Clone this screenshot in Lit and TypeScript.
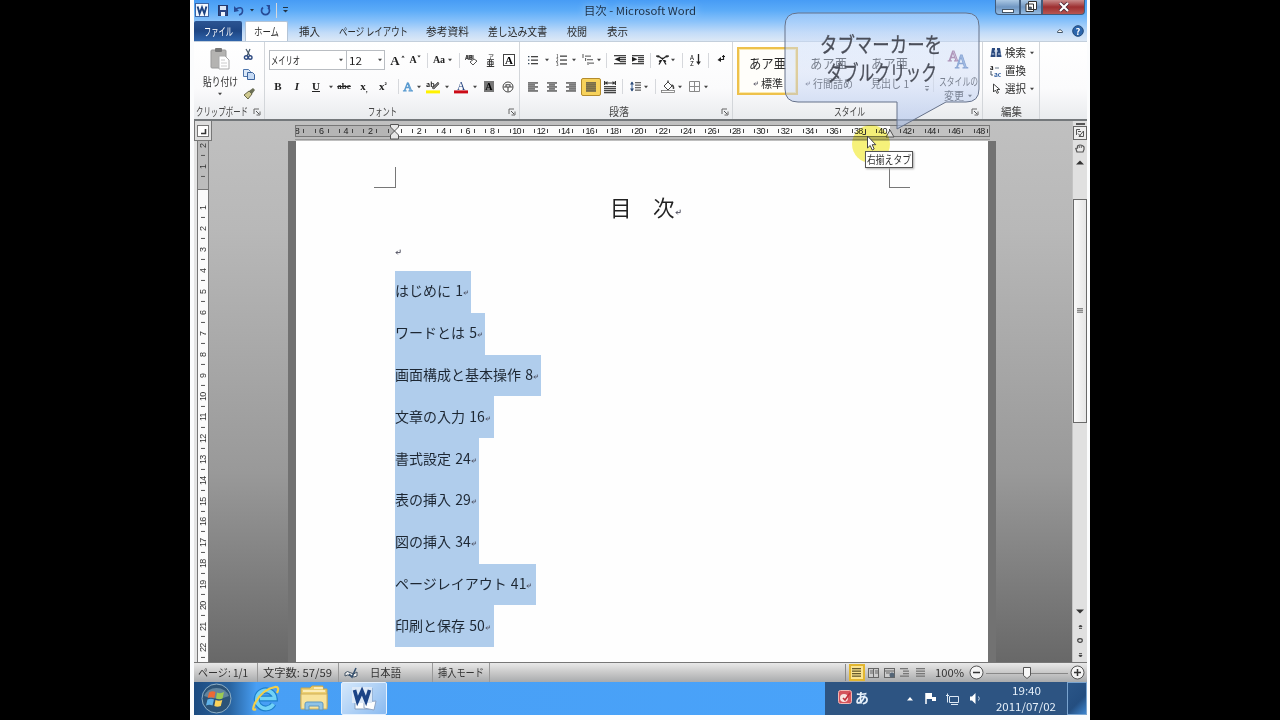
import { LitElement, html, css, svg } from 'lit';
import { customElement } from 'lit/decorators.js';
import { styleMap } from 'lit/directives/style-map.js';

// a label squeezed to the width of the narrow UI font
const fit = (text: string, w: number, size = 11, cls = '') => html`
  <svg class="fit ${cls}" width=${w} height=${size + 4} font-size=${size}>
    <text x="0" y=${size + 0.5} textLength=${w} lengthAdjust="spacingAndGlyphs">${text}</text>
  </svg>`;

const pic = (w: number, h: number, body: unknown) => html`
  <svg class="pic" width=${w} height=${h} viewBox="0 0 ${w} ${h}">${body}</svg>`;

// text lines used by the list and alignment icons: [x, y, width]
const bars = (rows: number[][], color = '#444') =>
  rows.map(([x, y, w]) => svg`<rect x=${x} y=${y} width=${w} height="1.3" fill=${color} />`);

const arrow = () => pic(6, 4, svg`<path d="M1 .8h4L3 3.2z" fill="#444" />`);
const sep = () => html`<i class="sep"></i>`;
const glyph = (text: string, cls = '') => html`<span class="glyph ${cls}">${text}</span>`;
const launcher = () => pic(8, 8, svg`<path d="M1 6V1h5M3.5 7h3.500V3.500" fill="none" stroke="#666" /><path d="M3 3l3 3" stroke="#555" />`);
const ret = (s = 6) => html`<svg class="ret" width=${s} height=${s} viewBox="0 0 6 6">
  <path d="M5.2 .6V3.6H1M2.8 1.8 1 3.6l1.8 1.8" fill="none" stroke="#445" stroke-width=".9" /></svg>`;

type Tool = [center: number, width: number, icon: unknown];

// tools on one line, each centred on its stop counted from the line's start
const toolRow = (tools: Tool[]) => {
  let end = 0;
  return html`<div class="tools">${tools.map(([c, w, icon]) => {
    const gap = c - w / 2 - end;
    end = c + w / 2;
    return html`<span class="tool" style=${styleMap({ width: `${w}px`, marginLeft: `${gap}px` })}>${icon}</span>`;
  })}</div>`;
};

const wordLogo = (s: number) => html`<svg class="pic" width=${s} height=${s} viewBox="0 0 14 14">
  <rect x=".5" y=".5" width="13" height="13" fill="#f4f8fd" stroke="#3b64a3" />
  <path d="M2.6 3.5 4.6 10.5 7 4.4 9.4 10.5 11.4 3.5" fill="none" stroke="#1d4382" stroke-width="1.9" /></svg>`;

const alignIcon = (xs: number[][]) => pic(12, 10, bars(xs));
const full = [0.3, 2.3, 4.3, 6.3, 8.3];

// counted from the end of the font size box
const fontTop: Tool[] = [
  [10, 12, glyph('A', 'f12')], [18, 4, pic(4, 10, svg`<path d="M.3 2.4h3.4L2 .4z" fill="#333" />`)],
  [28, 9, glyph('A', 'f9')], [34, 4, pic(4, 10, svg`<path d="M.3.6h3.4L2 2.4z" fill="#333" />`)],
  [42, 2, sep()], [54, 14, glyph('Aa', 'f9')], [65, 6, arrow()], [74, 2, sep()],
  [86, 13, pic(13, 13, svg`<rect x="1" y="1" width="8" height="4" fill="#999" /><text x="0" y="6" font-size="6" font-weight="700" fill="#333">AB</text><path d="m5 8 4-3 3 2-4 4z" fill="#fff" stroke="#555" />`)],
  [106, 12, pic(12, 13, svg`<text x="3" y="5" font-size="6" fill="#222">ア</text><text x="1.5" y="12.4" font-size="8" font-weight="700" fill="#333">亜</text>`)],
  [124, 12, pic(12, 12, svg`<rect x=".5" y=".5" width="11" height="11" fill="#fff" stroke="#444" /><text x="2" y="10" font-size="11" font-weight="700" font-family="Liberation Serif, serif">A</text>`)],
];

const fontBottom: Tool[] = [
  [13, 10, glyph('B', 'b')], [32, 8, glyph('I', 'it b')], [51, 10, glyph('U', 'u b')], [66, 6, arrow()],
  [79, 14, glyph('abe', 'strike')], [99, 13, html`${glyph('x', 'b')}<sub>,</sub>`], [118, 12, html`${glyph('x', 'b')}<sup>²</sup>`],
  [133, 2, sep()],
  [143, 12, pic(12, 13, svg`<text x="1.2" y="10.5" font-size="13" font-family="Liberation Serif, serif" fill="#eaf4ff" stroke="#5a9bd0" stroke-width=".9">A</text>`)],
  [154, 6, arrow()],
  [168, 14, pic(14, 14, svg`<text x="0" y="7" font-size="7" font-weight="700" fill="#222">ab</text><path d="m6 8 6-6 1 2-5 5z" fill="#777" stroke="#333" stroke-width=".6" /><rect y="10.4" width="14" height="3" fill="#fff200" />`)],
  [182, 6, arrow()],
  [196, 14, pic(14, 14, svg`<text x="3" y="9.5" font-size="11.5" font-family="Liberation Serif, serif" fill="#1f3f7d">A</text><rect y="10.4" width="14" height="3" fill="#cb0a16" />`)],
  [210, 6, arrow()],
  [224, 10, pic(10, 11, svg`<rect width="10" height="11" fill="#777" /><text x="1.2" y="9" font-size="10" font-family="Liberation Serif, serif" font-weight="700">A</text>`)],
  [243, 12, pic(12, 12, svg`<circle cx="6" cy="6" r="5" fill="#fff" stroke="#444" /><path d="M1.5 6h9M3.5 3.7h5M6 6v4.500M4 3.700v2.300M8 3.700v2.300" stroke="#444" stroke-width="1.100" />`)],
];

const paraTop: Tool[] = [
  [13, 10, pic(10, 10, svg`${bars([[3, 1, 7], [3, 4.5, 7], [3, 8, 7]])}<path d="M0 1.6h1.4M0 5.1h1.4M0 8.6h1.4" stroke="#345" stroke-width="1.4" />`)],
  [27, 6, arrow()],
  [41, 11, pic(11, 12, svg`${bars([[4, 1.5, 7], [4, 5.4, 7], [4, 9.3, 7]])}<text x="0" y="4" font-size="4.5">1</text><text x="0" y="8" font-size="4.5">2</text><text x="0" y="12" font-size="4.5">3</text>`)],
  [54, 6, arrow()],
  [68, 12, pic(12, 12, svg`${bars([[3, 1.5, 6], [5, 5, 6], [7, 8.5, 5]], '#777')}<path d="M1 0v4M3.6 4v3M6 8v3" stroke="#555" />`)],
  [79, 6, arrow()], [86, 2, sep()],
  [100, 12, pic(12, 10, svg`${bars([[0, 0, 12], [6, 2, 6], [6, 4, 6], [6, 6, 6], [0, 8, 12]])}<path d="M6 1.8v5L.5 4.3z" fill="#222" />`)],
  [118, 12, pic(12, 10, svg`${bars([[0, 0, 12], [6, 2, 6], [6, 4, 6], [6, 6, 6], [0, 8, 12]])}<path d="M0 1.8v5l5.5-2.5z" fill="#222" />`)],
  [130, 2, sep()],
  [142, 13, pic(13, 11, svg`<path d="M3 9.5 6.5 3.500 10 9.5M0 1.2h3.4M9.6 1.2H13M2 .2v2.4M11 .2v2.4M3 1.500l7 5M10 1.500l-7 5" fill="none" stroke="#222" stroke-width="1.3" />`)],
  [153, 6, arrow()], [162, 2, sep()],
  [175, 11, pic(11, 12, svg`<text x="0" y="5.6" font-size="6.4">A</text><text x="0" y="12" font-size="6.4">Z</text><path d="M8.5 0v9" stroke="#222" stroke-width="1.3" /><path d="M6.2 7.6h4.6L8.5 11z" fill="#222" />`)],
  [188, 2, sep()],
  [201, 8, pic(8, 10, svg`<path d="M6.5 0v4.5H3M5 1.5h3" fill="none" stroke="#222" stroke-width="1.2" /><path d="M4 2v5L.5 5z" fill="#222" />`)],
];

const paraBottom: Tool[] = [
  [13, 12, alignIcon(full.map((y, i) => [1, y, i % 2 ? 7 : 10]))],
  [32, 12, alignIcon(full.map((y, i) => [i % 2 ? 3 : 1, y, i % 2 ? 6 : 10]))],
  [51, 12, alignIcon(full.map((y, i) => [i % 2 ? 4 : 1, y, i % 2 ? 7 : 10]))],
  [71, 20, html`<span class="pressed">${alignIcon(full.map((y) => [1, y, 10]))}</span>`],
  [90, 12, pic(12, 12, svg`${bars([[0, 5, 12], [0, 7, 12], [0, 9, 12], [0, 11, 12]])}<path d="M.6 0v4M11.4 0v4M1 2h10" stroke="#333" stroke-width="1.2" /><path d="m1 2 2.4-2v4zM11 2 8.6 0v4z" fill="#333" />`)],
  [102, 2, sep()],
  [115, 11, pic(11, 11, svg`${bars([[5, 1, 6], [5, 3.5, 6], [5, 6, 6], [5, 8.5, 6]], '#666')}<path d="M2 1v9" stroke="#2c5a97" /><path d="m0 3.4 2-3 2 3zM0 7.6l2 3 2-3z" fill="#2c4a77" />`)],
  [126, 6, arrow()], [135, 2, sep()],
  [148, 14, pic(14, 13, svg`<path d="m3 6 4-4 4 4-4 4z" fill="#fff" stroke="#444" /><path d="M7 2V.5M10.5 5q2.5.5 2 4" fill="none" stroke="#444" stroke-width="1.4" /><rect x=".5" y="10.5" width="13" height="2" fill="#fff" stroke="#777" stroke-width=".8" />`)],
  [160, 6, arrow()],
  [174, 11, pic(11, 11, svg`<path d="M.5.5h10v10H.5zM5.5.5v10M.5 5.5h10" fill="none" stroke="#888" />`)],
  [186, 6, arrow()],
];

const tabs = [
  { text: '挿入', w: 21, lead: 11 },
  { text: 'ページ レイアウト', w: 69, lead: 19 },
  { text: '参考資料', w: 43, lead: 18 },
  { text: '差し込み文書', w: 59, lead: 19 },
  { text: '校閲', w: 20, lead: 20 },
  { text: '表示', w: 21, lead: 20 },
];

const entries = [
  { text: 'はじめに 1', w: 76 },
  { text: 'ワードとは 5', w: 90 },
  { text: '画面構成と基本操作 8', w: 146 },
  { text: '文章の入力 16', w: 99 },
  { text: '書式設定 24', w: 84 },
  { text: '表の挿入 29', w: 84 },
  { text: '図の挿入 34', w: 84 },
  { text: 'ページレイアウト 41', w: 140.5 },
  { text: '印刷と保存 50', w: 99 },
];

const styleCards = [
  { name: '標準', w: 22, on: true, mark: true },
  { name: '行間詰め', w: 40, on: false, mark: true },
  { name: '見出し 1', w: 38, on: false, mark: false },
];

const columns = Array.from({ length: 29 }, (_, i) => (i - 4) * 2);
const lines = Array.from({ length: 25 }, (_, i) => i - 2);

@customElement('app-root')
export class AppRoot extends LitElement {
  static styles = css`
    :host {
      display: block;
      width: 1280px;
      height: 720px;
      background: #000;
      overflow: hidden;
      font: 11px 'Noto Sans CJK JP', 'Open Sans', sans-serif;
      color: #2b2b2b;
    }
    * { box-sizing: border-box; }
    svg { display: block; flex: none; overflow: visible; }
    .fit text { fill: currentColor; }
    .frame {
      position: relative;
      width: 900px;
      height: 720px;
      margin: 0 auto;
      padding: 0 3px 5px 4px;
      background: #fbfcfd;
      display: flex;
      flex-direction: column;
      overflow: hidden;
    }
    .head {
      height: 41px;
      flex: none;
      background: linear-gradient(#479cf5, #5babf8 25%, #85c0fa 50%, #c3dcf8 80%, #dce8f6);
    }
    .title { height: 21px; display: flex; }
    .quick { width: 390px; display: flex; align-items: center; padding: 0 0 1px 1px; gap: 6px; }
    .quick .logo { margin-right: 3px; }
    .caption { display: flex; align-items: center; flex: 1; color: #1c2f45; }
    .caption svg { filter: drop-shadow(0 0 4px #d8ebff); }
    .controls { display: flex; height: 15px; margin-right: 2px; }
    .ctl {
      display: flex;
      align-items: center;
      justify-content: center;
      border: 1px solid #405c7d;
      border-top: 0;
      background: linear-gradient(#abc8e4, #6f96c2 50%, #95bce2);
    }
    .ctl.min { width: 25px; border-radius: 0 0 0 4px; }
    .ctl.max { width: 22px; }
    .ctl.close { width: 43px; border-radius: 0 0 4px 0; background: linear-gradient(#c98c8b, #9d2f30 50%, #b85652); }
    .tabs { height: 20px; display: flex; align-items: center; }
    .file {
      width: 48px; height: 20px; color: #fff; display: flex; align-items: center; justify-content: center;
      background: linear-gradient(#2c5592, #1e4684 50%, #2f64ab); border-radius: 2px 2px 0 0;
    }
    .home {
      width: 43px; height: 20px; margin-left: 3px; display: flex; align-items: center; justify-content: center;
      background: #fff; border: 1px solid #b4c4d6; border-bottom: 0; border-radius: 2px 2px 0 0;
    }
    .help { margin-left: auto; display: flex; align-items: center; gap: 8px; padding-right: 3px; }
    .ribbon {
      height: 80px;
      flex: none;
      display: flex;
      background: linear-gradient(#fff, #fbfbfc 60%, #e9ebee);
      border-top: 1px solid #c3cfdc;
      border-bottom: 2px solid #74787b;
    }
    .group { display: flex; flex-direction: column; border-right: 1px solid #d3d6da; height: 77px; }
    .body { flex: 1; min-height: 0; }
    .foot {
      height: 15px; display: flex; align-items: center; justify-content: center; flex: none;
      position: relative; color: #444; padding-right: 20px;
    }
    .foot .pic { position: absolute; right: 3px; top: 4px; }
    .clip { width: 71px; }
    .clip .foot { padding-right: 14px; }
    .font { width: 255px; }
    .para { width: 213px; }
    .para .foot { padding-right: 14px; }
    .styles { width: 250px; }
    .styles .foot { padding-right: 16px; }
    .edit { width: 57px; }
    .edit .foot { padding-right: 0; }
    .pasteset { display: flex; padding: 6px 0 0 8px; }
    .paste { width: 36px; display: flex; flex-direction: column; align-items: center; gap: 3px; }
    .clips { display: flex; flex-direction: column; gap: 8px; padding: 1px 0 0 5px; }
    .tools { display: flex; align-items: center; height: 27px; }
    .tool { display: flex; align-items: center; justify-content: center; flex: none; height: 20px; }
    .line { display: flex; padding-top: 5px; height: 31px; align-items: center; }
    .combo {
      height: 20px; border: 1px solid #b9bdc2; background: #fff; display: flex; align-items: center;
      justify-content: space-between; padding: 0 2px 0 1px; color: #222;
    }
    .combo.face { width: 78px; margin-left: 4px; }
    .combo.size { width: 39px; margin-left: -1px; padding: 0 1px 0 2px; }
    .glyph { font: 11px 'Liberation Serif', serif; color: #222; line-height: 1; }
    .b { font-weight: 900; }
    .it { font-style: italic; }
    .u { text-decoration: underline; }
    .strike { font-size: 9px; font-weight: 700; text-decoration: line-through; }
    .f12 { font-size: 13px; font-weight: 700; }
    .f9 { font-size: 10px; font-weight: 700; }
    sub, sup { font: 700 7px 'Liberation Sans', sans-serif; line-height: 1; }
    sub { margin-top: 6px; }
    sup { margin-top: -5px; }
    .sep { width: 1px; height: 15px; background: #d6d8dc; }
    .pressed {
      width: 20px; height: 18px; border: 1px solid #b48b2c; border-radius: 2px; background: #f7d25b;
      display: flex; align-items: center; justify-content: center;
    }
    .gallery { display: flex; padding: 5px 0 0 4px; }
    .card {
      width: 61px; height: 48px; flex: none; display: flex; flex-direction: column; align-items: center;
      padding-top: 5px; gap: 5px; border: 2px solid transparent;
    }
    .card.on { border-color: #eec14b; background: #fffefa; outline: 1px solid #fbe9ab; outline-offset: -3px; }
    .card .name { display: flex; align-items: center; gap: 3px; }
    .more { width: 14px; display: flex; align-items: flex-end; justify-content: center; height: 45px; border-right: 1px solid #ddd; }
    .change { display: flex; flex-direction: column; align-items: center; width: 44px; margin-left: 2px; }
    .change .word { height: 13px; margin-top: 1px; display: flex; align-items: center; gap: 3px; }
    .cmds { display: flex; flex-direction: column; gap: 3px; padding: 3px 0 0 7px; }
    .cmd { display: flex; align-items: center; gap: 3px; height: 15px; }
    .desk {
      height: 541px; flex: none; display: flex;
      background: linear-gradient(#c0c0c0, #b8b8b8 20%, #999 65%, #686868);
    }
    .left { width: 15px; display: flex; flex-direction: column; background: linear-gradient(90deg, #e4e4e4 3px, #c9c9c9 3px); }
    .corner {
      width: 18px; height: 20px; border: 1px solid #777; border-top: 0; background: #ddd;
      display: flex; align-items: center; justify-content: center;
    }
    .vruler {
      margin-left: 3px; width: 12px; height: 521px; overflow: hidden; border: 1px solid #777; border-width: 0 1px;
      background: linear-gradient(#bcbcbc 48px, #777 48px, #777 49px, #fbfbfb 49px);
    }
    .vcells { margin-top: -6.4px; }
    .vcell {
      height: 20.95px; position: relative; display: flex; align-items: center; justify-content: center;
      writing-mode: vertical-rl; transform: rotate(180deg); font: 9px 'Liberation Sans', sans-serif;
      letter-spacing: -0.8px; color: #333;
    }
    .vcell::before { content: ''; position: absolute; top: 0; left: 3px; width: 4px; height: 1px; background: #555; }
    .canvas { flex: 1; display: flex; flex-direction: column; }
    .rulerrow { height: 20px; padding: 4px 0 0 86px; }
    .hruler {
      width: 695px; height: 12px; overflow: hidden; border: 1px solid #777;
      background: linear-gradient(90deg, #b5b5b5 99px, #fbfbfb 99px, #fbfbfb 594px, #c2c2c2 594px);
      box-shadow: 0 2px #bdbdbd, 0 3px #999;
    }
    .hcells { display: flex; width: 720px; margin-left: -11px; }
    .hcell {
      flex: none; width: 24.42px; height: 10px; display: flex; align-items: center; justify-content: center;
      font: 9px 'Liberation Sans', sans-serif; letter-spacing: -0.8px; color: #222;
    }
    .hcell span { width: 12px; text-align: center; text-indent: -0.8px; }
    .hcell i { width: 1px; height: 4px; background: #444; flex: none; }
    .page {
      margin-left: 79px; width: 708px; height: 521px; border: 8px solid #727272; border-width: 0 8px;
      background: #fefefe; color: #222; padding-left: 78px;
    }
    .marks { display: flex; justify-content: space-between; width: 536px; padding-top: 26px; }
    .mark { width: 21px; height: 21px; border-bottom: 1px solid #777; }
    .mark.l { width: 22px; border-right: 1px solid #777; }
    .mark.r { border-left: 1px solid #777; }
    .heading {
      display: flex; align-items: flex-end; width: 536px; height: 34px; padding-left: 236px;
      font-size: 21.5px; line-height: 30px; white-space: pre;
    }
    .heading .ret { margin: 0 0 7px; }
    .blank { height: 49px; padding: 27px 0 0 21px; }
    .toc { margin-left: 21px; }
    .entry {
      height: 41.8px; background: #b0cdec; display: flex; align-items: center; font-size: 14px; white-space: pre;
      word-spacing: 1px; color: #1d2733; padding-bottom: 3px;
    }
    .entry .ret { margin-top: 5px; }
    .scroll {
      width: 15px; display: flex; flex-direction: column; align-items: center; background: #e0e0e0;
      border-left: 1px solid #c4c4c4; padding-top: 2px;
    }
    .split { width: 9px; height: 2px; background: #555; margin-bottom: 1px; flex: none; }
    .upper { display: flex; flex-direction: column; align-items: center; height: 73px; flex: none; }
    .browse { width: 14px; height: 14px; border: 1px solid #666; display: flex; align-items: center; justify-content: center; background: #eee; margin-bottom: 4px; }
    .scrollup { margin-top: 7px; }
    .thumb {
      width: 14px; height: 224px; flex: none; border: 1px solid #6a6a6a; margin-bottom: 186px;
      background: linear-gradient(90deg, #fafafa, #e6e6e6); display: flex; align-items: center; justify-content: center;
    }
    .lower { display: flex; flex-direction: column; align-items: center; gap: 9.5px; }
    .status {
      height: 20px; flex: none; display: flex; align-items: center; border-top: 1px solid #777;
      background: linear-gradient(#e9e9e9, #c9c9c9 50%, #a9abad); color: #333;
    }
    .cell { display: flex; align-items: center; justify-content: center; height: 19px; border-right: 1px solid #999; }
    .cell.pages { width: 64px; padding-right: 5px; }
    .cell.words { width: 81px; padding-right: 1px; }
    .cell.lang { width: 94px; justify-content: flex-start; gap: 12px; padding-left: 5px; }
    .cell.mode { width: 57px; }
    .views { margin-left: auto; display: flex; align-items: center; gap: 2.6px; padding-left: 3px; border-left: 1px solid #888; height: 17px; }
    .view { width: 13px; display: flex; justify-content: center; }
    .view.on { width: 16px; height: 17px; border: 2px solid #e2b630; background: #fbe491; align-items: center; }
    .zoom { display: flex; align-items: center; margin-left: 8px; gap: 5px; padding-right: 2px; }
    .taskbar { height: 33px; flex: none; display: flex; background: linear-gradient(90deg, #1c4b80, #28639f 4%, #489ff5 7%, #4aa4fb); }
    .apps { display: flex; align-items: center; padding-left: 7px; gap: 20px; width: 631px; }
    .running {
      width: 46px; height: 33px; margin-left: -7px; border: 1px solid #e4f1ff; border-radius: 2px;
      background: linear-gradient(135deg, #d5e8fb, #8abaf0); display: flex; align-items: center; justify-content: center;
    }
    .tray { flex: 1; display: flex; align-items: center; background: #2d5482; color: #e6f0fa; padding-left: 13px; gap: 3px; }
    .ime { font-size: 14px; font-weight: 700; line-height: 20px; margin-top: -3px; }
    .badge { margin-top: -3px; }
    .icons { display: flex; align-items: center; gap: 10px; margin-left: 34px; }
    .clock { width: 64px; margin-left: 10px; display: flex; flex-direction: column; align-items: center; gap: 1px; }
    .desktop { width: 20px; border: 1px solid #7aa4cf; background: linear-gradient(135deg, #2b5688, #244e80 60%, #3f86cf); }
    .over { position: absolute; }
    .spot { left: 662px; top: 125px; width: 38px; height: 38px; border-radius: 50%; background: #f7f27a; mix-blend-mode: multiply; }
    .markers { left: 0; top: 0; }
    .callout { left: 594px; top: 12px; }
    .callout text { fill: #4b4f5a; stroke: #4b4f5a; stroke-width: 0.3; }
    .tip {
      left: 675px; top: 151px; width: 48px; height: 17px; border: 1px solid #555; background: #fff; color: #333;
      display: flex; align-items: center; justify-content: center; box-shadow: 1px 1px 2px #aaa;
    }
    .cursor { left: 676px; top: 135px; }
  `;

  private head() {
    return html`
      <div class="head">
        <div class="title">
          <div class="quick">
            <span class="logo">${wordLogo(14)}</span>
            ${pic(10, 11, svg`<rect x=".5" y=".5" width="9" height="10" fill="#2c4583" stroke="#24386d" /><rect x="2" y="1" width="6" height="4" fill="#dbe6f6" /><rect x="3" y="7" width="4" height="4" fill="#eef3fb" />`)}
            ${pic(10, 11, svg`<path d="M2 4q6-3 6.5 1T5 10" fill="none" stroke="#274b97" stroke-width="1.6" /><path d="M0 1v6l5-1z" fill="#274b97" />`)}
            ${pic(4, 4, svg`<path d="M0 1h4L2 3.5z" fill="#234" />`)}
            ${pic(10, 11, svg`<path d="M3 2.5a4 4 0 1 0 5 0" fill="none" stroke="#274b97" stroke-width="1.7" /><path d="M6 0h4v4z" fill="#274b97" />`)}
            <i class="sep"></i>
            ${pic(5, 6, svg`<path d="M0 .5h5" stroke="#234" /><path d="M0 3h5L2.5 5.6z" fill="#234" />`)}
          </div>
          <div class="caption">${fit('目次 - Microsoft Word', 112, 11)}</div>
          <div class="controls">
            <span class="ctl min">${pic(12, 11, svg`<rect x=".5" y="7.5" width="11" height="3" fill="#fff" stroke="#456" />`)}</span>
            <span class="ctl max">${pic(12, 12, svg`<path d="M3.5.5h8v8h-8zM1 3h7.5v7.5H1z" fill="#fff" stroke="#333" /><path d="M3.4 6h3v2.6h-3z" fill="#567" stroke="#333" stroke-width=".6" />`)}</span>
            <span class="ctl close">${pic(12, 10, svg`<path d="m2 1 8 8M10 1 2 9" stroke="#423" stroke-width="3.8" /><path d="m2 1 8 8M10 1 2 9" stroke="#fff" stroke-width="2.2" />`)}</span>
          </div>
        </div>
        <div class="tabs">
          <span class="file">${fit('ファイル', 29, 11)}</span>
          <span class="home">${fit('ホーム', 25, 11)}</span>
          ${tabs.map((t) => html`<span style=${styleMap({ marginLeft: `${t.lead}px` })}>${fit(t.text, t.w, 11)}</span>`)}
          <span class="help">
            ${pic(8, 6, svg`<path d="M1.500 4.500V3.500L4 1.500l2.500 2v1z" fill="#fff" stroke="#456" />`)}
            ${pic(12, 12, svg`<circle cx="6" cy="6" r="5.3" fill="#2c66ad" stroke="#204878" /><text x="3.4" y="9.6" font-size="9.5" font-weight="700" fill="#fff">?</text>`)}
          </span>
        </div>
      </div>`;
  }

  private ribbon() {
    return html`
      <div class="ribbon">
        <div class="group clip">
          <div class="body pasteset">
            <div class="paste">
              ${pic(20, 23, svg`<rect x="1" y="2" width="15" height="18" rx="1" fill="#b4b3b1" stroke="#999" /><rect x="5" y="0" width="7" height="4" rx="1" fill="#777" /><path d="M9 8h6l4 4v9H9z" fill="#fff" stroke="#aaa" /><path d="M11 12h4M11 15h6M11 18h6" stroke="#ccc" />`)}
              ${fit('貼り付け', 35, 11)}
              ${arrow()}
            </div>
            <div class="clips">
              ${pic(11, 12, svg`<path d="m3 0 4 7M7 0 4 7" stroke="#456" stroke-width="1.2" /><circle cx="3.2" cy="8.5" r="1.8" fill="none" stroke="#2f4b82" stroke-width="1.4" /><circle cx="7.2" cy="8.5" r="1.8" fill="none" stroke="#2f4b82" stroke-width="1.4" />`)}
              ${pic(12, 11, svg`<path d="M.5.5h5l2 2v5h-7z" fill="#dbe8f8" stroke="#4f76ad" /><path d="M4.5 3.5h5l2 2v5h-7z" fill="#c5daf4" stroke="#3c649e" />`)}
              ${pic(12, 12, svg`<path d="M1 7 6 3l3 3-4 5z" fill="#cfc98f" stroke="#68674a" /><path d="m6 3 4-3 2 2-3 4z" fill="#6b6f56" />`)}
            </div>
          </div>
          <div class="foot">${fit('クリップボード', 52, 11)}${launcher()}</div>
        </div>

        <div class="group font">
          <div class="body">
            <div class="line">
              <span class="combo face">${fit('メイリオ', 29, 11)}${arrow()}</span>
              <span class="combo size">${fit('12', 13, 11)}${arrow()}</span>
              ${toolRow(fontTop)}
            </div>
            ${toolRow(fontBottom)}
          </div>
          <div class="foot">${fit('フォント', 29, 11)}${launcher()}</div>
        </div>

        <div class="group para">
          <div class="body">
            <div class="line">${toolRow(paraTop)}</div>
            ${toolRow(paraBottom)}
          </div>
          <div class="foot">${fit('段落', 20, 11)}${launcher()}</div>
        </div>

        <div class="group styles">
          <div class="body gallery">
            ${styleCards.map((c) => html`
              <div class="card ${c.on ? 'on' : ''}">
                ${fit('あア亜', 37, 13)}
                <span class="name">${c.mark ? ret(5) : ''}${fit(c.name, c.w, 11)}</span>
              </div>`)}
            <div class="more">${pic(6, 6, svg`<path d="M1 .5h4" stroke="#444" /><path d="M1 2.800h4L3 5.200z" fill="#444" />`)}</div>
            <div class="change">
              ${pic(24, 27, svg`<text x="2" y="14" font-size="15" font-family="Liberation Serif, serif" fill="#e9dcec" stroke="#94547f" stroke-width="1">A</text><text x="9" y="21" font-size="18" font-family="Liberation Serif, serif" fill="#7fa3d6" stroke="#4c74b4" stroke-width=".8">A</text>`)}
              <span class="word">${fit('スタイルの', 39, 11)}</span>
              <span class="word">${fit('変更', 20, 11)}${arrow()}</span>
            </div>
          </div>
          <div class="foot">${fit('スタイル', 31, 11)}${launcher()}</div>
        </div>

        <div class="group edit">
          <div class="body cmds">
            <span class="cmd">${pic(12, 11, svg`<path d="M2 1h3l.5 9H.5zM7 1h3l1.5 9h-5z" fill="#2b4a7f" /><path d="M4 4h4M1.6 7h2.6M8 7h2.6" stroke="#c8d8ee" />`)}${fit('検索', 21, 11)}${arrow()}</span>
            <span class="cmd">${pic(12, 12, svg`<text x="0" y="5" font-size="6" font-weight="700">a</text><text x="4" y="11.5" font-size="6.5" font-weight="700" fill="#2b5a9e">ac</text><path d="M1 6v4h2" fill="none" stroke="#456" /><path d="M5 3h4" stroke="#678" />`)}${fit('置換', 21, 11)}</span>
            <span class="cmd">${pic(12, 11, svg`<path d="M3.5 1v8l2-2 1.6 3.4 1.4-.7L7 6.5h2.8z" fill="#fff" stroke="#333" stroke-width=".9" />`)}${fit('選択', 21, 11)}${arrow()}</span>
          </div>
          <div class="foot">${fit('編集', 21, 11)}</div>
        </div>
      </div>`;
  }

  private desk() {
    return html`
      <div class="desk">
        <div class="left">
          <div class="corner">${pic(12, 12, svg`<rect x=".5" y=".5" width="11" height="11" fill="#fff" stroke="#777" /><path d="M8.5 4v4.5H4" fill="none" stroke="#333" stroke-width="1.6" />`)}</div>
          <div class="vruler"><div class="vcells">
            ${lines.map((n) => html`<div class="vcell">${n === 0 ? '' : Math.abs(n)}</div>`)}
          </div></div>
        </div>
        <div class="canvas">
          <div class="rulerrow"><div class="hruler"><div class="hcells">
            ${columns.map((n) => html`<div class="hcell"><i></i><span>${n === 0 ? '' : Math.abs(n)}</span><i></i></div>`)}
          </div></div></div>
          <div class="page">
            <div class="marks"><span class="mark l"></span><span class="mark r"></span></div>
            <div class="heading">目　次${ret(6)}</div>
            <div class="blank">${ret(6)}</div>
            <div class="toc">
              ${entries.map((e) => html`<div class="entry" style=${styleMap({ width: `${e.w}px` })}>${e.text}${ret(5)}</div>`)}
            </div>
          </div>
        </div>
        <div class="scroll">
          <span class="split"></span>
          <div class="upper">
            <span class="browse">${pic(10, 10, svg`<path d="M1.5 7V1.5H5M3 3.5h3M8.5 3v5.5H4L8.5 3M3 5.5 6.5 9" fill="none" stroke="#555" />`)}</span>
            ${pic(10, 9, svg`<path d="M2 8 .8 4.500 2.500 4V2q2.500-2 5.500 0l1 1v2.500L8 8z" fill="#e8e8e8" stroke="#555" stroke-width="1.200" /><path d="M4.300 1.500V4M6.300 1.500V4" stroke="#666" />`)}
            <span class="scrollup">${pic(8, 5, svg`<path d="M0 4.6h8L4 .6z" fill="#333" />`)}</span>
          </div>
          <div class="thumb">${pic(6, 6, bars([[0, 0, 6], [0, 1.8, 6], [0, 3.6, 6]], '#888'))}</div>
          <div class="lower">
            ${pic(8, 5, svg`<path d="M0 .4h8L4 4.4z" fill="#333" />`)}
            ${pic(5, 5, svg`<path d="M1 2.500l1.500-1.500L4 2.500zM1 4.300h3" fill="#444" stroke="#444" />`)}
            ${pic(6, 5, svg`<ellipse cx="3" cy="2.5" rx="2.3" ry="1.8" fill="#ddd" stroke="#444" stroke-width="1.2" />`)}
            ${pic(5, 5, svg`<path d="M1 2.500 2.500 4 4 2.500zM1 .7h3" fill="#444" stroke="#444" />`)}
          </div>
        </div>
      </div>`;
  }

  private status() {
    const page = (body: unknown) => pic(11, 10, svg`<rect x=".5" y=".5" width="10" height="9" fill="#ccc" stroke="#666" />${body}`);
    return html`
      <div class="status">
        <span class="cell pages">${fit('ページ: 1/1', 50, 11)}</span>
        <span class="cell words">${fit('文字数: 57/59', 69, 11)}</span>
        <span class="cell lang">
          ${pic(14, 12, svg`<path d="M1 6q2-3 6 0 3 2 6-1v4q-3 2-6 0-4-2-6 0z" fill="#eee" stroke="#456" /><path d="m5 7 3 3 4-9" fill="none" stroke="#35506f" stroke-width="1.6" />`)}
          ${fit('日本語', 31, 11)}
        </span>
        <span class="cell mode">${fit('挿入モード', 46, 11)}</span>
        <span class="views">
          <span class="view on">${pic(9, 9, bars([[0, 0, 9], [0, 2.5, 9], [0, 5, 9], [0, 7.5, 9]], '#665a2c'))}</span>
          <span class="view">${page(svg`<path d="M5.5 1v8M2 3h3M7 3h3M2 5h3M7 5h3" stroke="#666" />`)}</span>
          <span class="view">${page(svg`<path d="M1 3h9M2 5h4" stroke="#666" /><circle cx="8" cy="7" r="2.5" fill="#567" />`)}</span>
          <span class="view">${pic(10, 9, bars([[0, 0, 8], [3, 2.5, 6], [3, 5, 6], [0, 7.5, 9]], '#777'))}</span>
          <span class="view">${pic(9, 9, bars([[0, 0, 9], [0, 2.5, 9], [0, 5, 9], [0, 7.5, 9]], '#777'))}</span>
        </span>
        <span class="zoom">
          ${fit('100%', 29, 11)}
          ${pic(15, 15, svg`<circle cx="7.5" cy="7.5" r="6.5" fill="#f4f4f4" stroke="#555" /><path d="M4 7.5h7" stroke="#333" stroke-width="1.5" />`)}
          ${pic(76, 12, svg`<path d="M-3 6.5h82" stroke="#888" /><path d="M34.5 .5h7v8L38 11.5l-3.5-3z" fill="#f7f7f7" stroke="#555" />`)}
          ${pic(15, 15, svg`<circle cx="7.5" cy="7.5" r="6.5" fill="#f4f4f4" stroke="#555" /><path d="M4 7.5h7M7.5 4v7" stroke="#333" stroke-width="1.5" />`)}
        </span>
      </div>`;
  }

  private taskbar() {
    return html`
      <div class="taskbar">
        <div class="apps">
          ${pic(31, 31, svg`
            <circle cx="15.5" cy="15.5" r="14.5" fill="#2b5377" stroke="#8fb0c6" />
            <path d="M3 13a13 11 0 0 1 25 0q-12 5-25 0" fill="#86a6bb" opacity=".6" />
            <path d="M8 9.5q3.5-2 6.5-.5l-1.3 6q-3-1.5-6.5 0z" fill="#ec6a35" />
            <path d="M16 9.5q3.5 1.5 7-.5l-1.5 6.5q-3 1.5-6.5 0z" fill="#9ccb53" />
            <path d="M6.5 16.5q3.5-1.5 6.5 0l-1.5 6q-3-1.5-6.5 0z" fill="#5fb2e8" />
            <path d="M14.5 17q3.5 1.5 6.8 0l-1.5 6q-3.5 1.5-6.5 0z" fill="#fad35a" />`)}
          ${pic(28, 28, svg`
            <path d="M21.5 19a9 9 0 1 1 1.2-5.5H8" fill="none" stroke="#1e7fcb" stroke-width="6" />
            <path d="M21.5 19a9 9 0 1 1 1.2-5.5H8" fill="none" stroke="#71d2f7" stroke-width="3.6" />
            <path d="M4 24Q-1 27 3 18 11 4 23 2q5-.5 2 6" fill="none" stroke="#f3cf4a" stroke-width="2.2" />`)}
          ${pic(28, 27, svg`
            <path d="M1 3h9l2-2h11v3h4v18H1z" fill="#eccf72" stroke="#c9a549" />
            <path d="M3 6h22M14 3h9" stroke="#fff6cf" stroke-width="1.6" />
            <path d="M1 9h26v15H1z" fill="#f8e39b" stroke="#d2b057" />
            <path d="M5 25v-6q0-2 2-2h14q2 0 2 2v6h-4v-4H9v4z" fill="#8fc3e6" stroke="#5f97c0" />`)}
          <span class="running">${pic(26, 26, svg`
            <path d="M4 2h17v21H4z" fill="#fdfefe" stroke="#86a0bf" />
            <path d="m13 16 12-1-2 9-10-2z" fill="#fdfefe" stroke="#8fa5c4" />
            <path d="M1 1h20v16H1z" fill="#dde9f7" />
            <path d="M3.500 4 6.500 15 11 5l4 10L18.500 4" fill="none" stroke="#1b4386" stroke-width="3.600" />`)}</span>
        </div>
        <div class="tray">
          <span class="badge">${pic(14, 14, svg`<rect x=".5" y=".5" width="13" height="13" rx="2" fill="#d4545c" stroke="#f2b6b4" /><circle cx="6" cy="8" r="4" fill="#f7e3e0" /><path d="m5 8 2 2 5-7" fill="none" stroke="#c02f3a" stroke-width="1.6" />`)}</span>
          <span class="ime">あ</span>
          <span class="icons">
            ${pic(8, 5, svg`<path d="M1 4.5h6L4 1z" fill="#fff" />`)}
            ${pic(12, 13, svg`<path d="M2 1v11" stroke="#fff" stroke-width="1.5" /><path d="M2 1h6v6H2zM8 5h4v4H8z" fill="#fff" />`)}
            ${pic(13, 12, svg`<path d="M3.5 3.5h9v6h-9zM1.5.5v9M0 2.5h3M5 11.5h7" fill="none" stroke="#dce8f4" />`)}
            ${pic(12, 13, svg`<path d="M1 4.5h2L6.5 1v11L3 8.5H1z" fill="#fff" /><path d="M9.5 4.5q1.5 2 0 4" fill="none" stroke="#cfe0f0" />`)}
          </span>
          <span class="clock">${fit('19:40', 29, 11)}${fit('2011/07/02', 60, 11)}</span>
        </div>
        <div class="desktop"></div>
      </div>`;
  }

  // the tutorial's highlight, balloon and pointer lie over the window
  private overlays() {
    return html`
      <svg class="over markers" width="900" height="200">
        <path d="M200.5 124.5h8v2.5l-4 4 4 4v4h-8v-4l4-4-4-4z" fill="#e8e8e8" stroke="#555" />
        <path d="m696 137 4-7 4 7z" fill="#ddd" stroke="#555" />
      </svg>
      <div class="over spot"></div>
      <svg class="over callout" width="200" height="122" font-size="21">
        <defs><linearGradient id="glass" x2="0" y2="1">
          <stop offset="0" stop-color="#c3dafa" stop-opacity=".5" />
          <stop offset=".5" stop-color="#cfdcf6" stop-opacity=".48" />
          <stop offset="1" stop-color="#a9c0ee" stop-opacity=".56" />
        </linearGradient></defs>
        <path d="M14 1H182Q195 1 195 14V77Q195 90 182 90H162L113 117V90H14Q1 90 1 77V14Q1 1 14 1Z" fill="url(#glass)" stroke="#66728a" />
        <text x="36" y="40" textLength="122" lengthAdjust="spacingAndGlyphs">タブマーカーを</text>
        <text x="43" y="68" textLength="110" lengthAdjust="spacingAndGlyphs">ダブルクリック</text>
      </svg>
      <div class="over tip">${fit('右揃えタブ', 44, 11)}</div>
      <svg class="over cursor" width="12" height="17">
        <path d="M-.5-4.5v4h-3" fill="none" stroke="#333" />
        <path d="M1.5 1v12l2.7-2.5 2 4.5 2-1-2-4.3h3.6z" fill="#fff" stroke="#444" />
      </svg>`;
  }

  render() {
    return html`
      <div class="frame">
        ${this.head()} ${this.ribbon()} ${this.desk()} ${this.status()} ${this.taskbar()} ${this.overlays()}
      </div>`;
  }
}
